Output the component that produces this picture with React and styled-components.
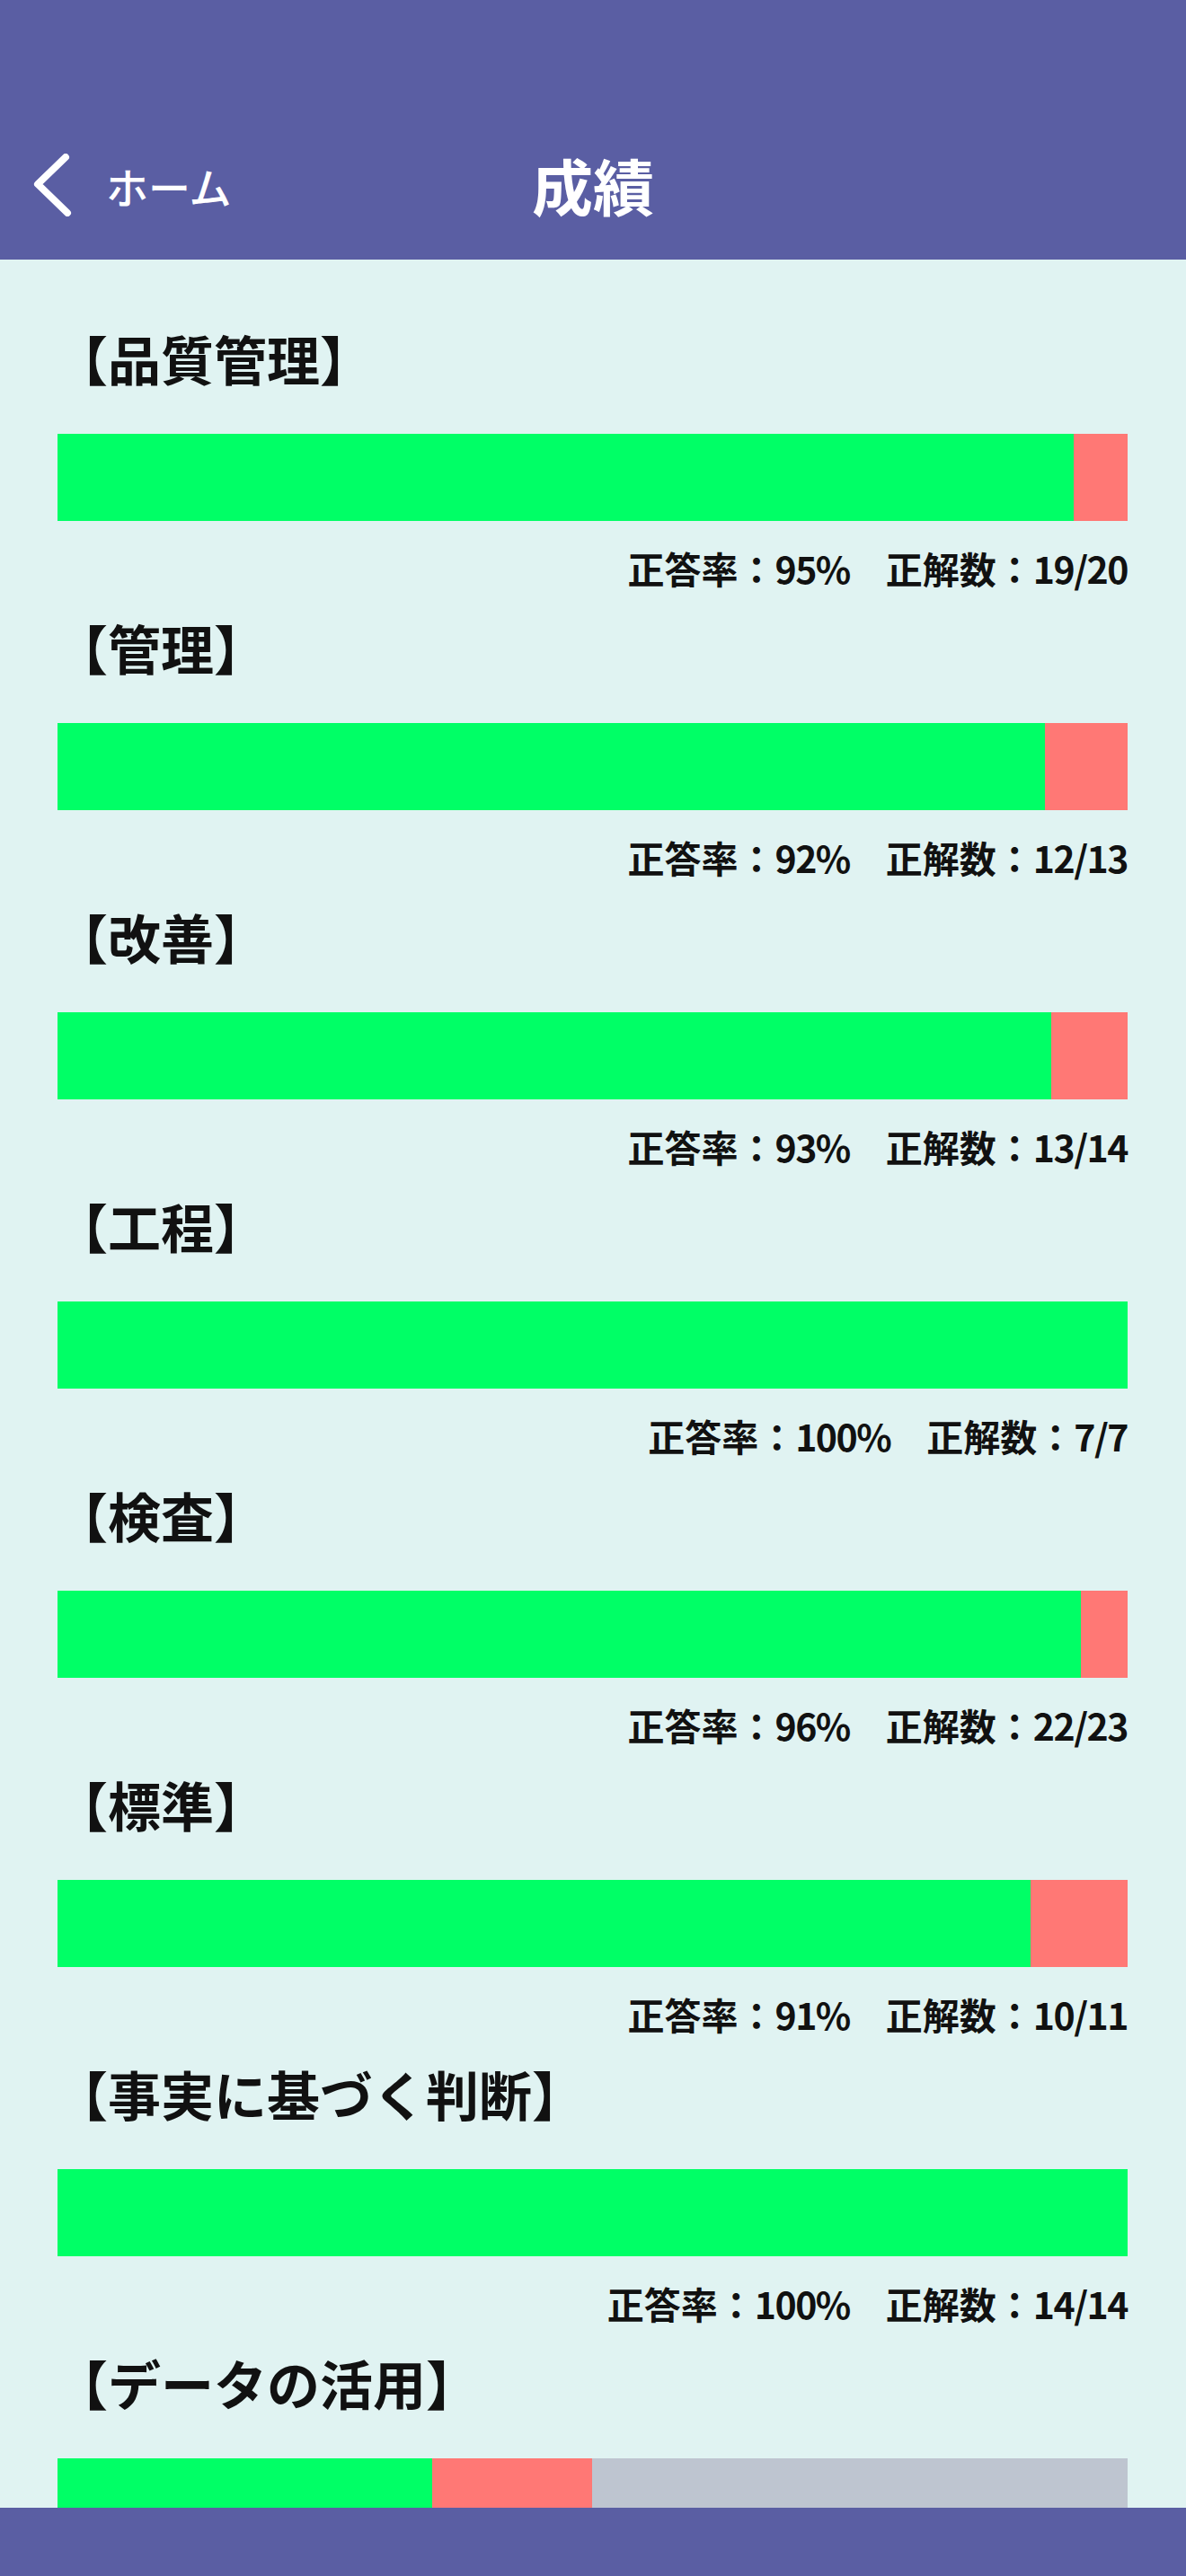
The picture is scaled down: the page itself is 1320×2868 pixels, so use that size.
import React from "react";
import styled, { createGlobalStyle } from "styled-components";

const GlobalStyle = createGlobalStyle`
  html, body {
    margin: 0;
    padding: 0;
  }
  body {
    font-family: "Noto Sans CJK JP", "Noto Sans", sans-serif;
    background: #e0f3f2;
  }
`;

const Screen = styled.div`
  display: flex;
  flex-direction: column;
  width: 1320px;
  height: 2868px;
  overflow: hidden;
  background: #e0f3f2;
`;

const Header = styled.header`
  flex: none;
  height: 289px;
  box-sizing: border-box;
  padding-top: 146px;
  background: #5a5ea3;
  color: #ffffff;
`;

const NavRow = styled.div`
  display: grid;
  grid-template-columns: 1fr auto 1fr;
  align-items: center;
  height: 120px;
`;

const BackButton = styled.button`
  justify-self: start;
  display: flex;
  align-items: center;
  gap: 38px;
  padding: 0 0 0 36px;
  border: 0;
  background: transparent;
  color: #ffffff;
  font-family: inherit;
  font-size: 47px;
  font-weight: 500;
  cursor: pointer;
`;

const Title = styled.h1`
  margin: 0;
  font-size: 68px;
  font-weight: 700;
  line-height: 1;
`;

const Content = styled.main`
  flex: 1;
  min-height: 0;
  overflow: hidden;
  box-sizing: border-box;
  padding: 74px 65px 0 64px;
  display: flex;
  flex-direction: column;
  gap: 25px;
`;

const Section = styled.section`
  display: flex;
  flex-direction: column;
`;

const SectionTitle = styled.h2`
  margin: 0 0 0 -3px;
  font-size: 59px;
  font-weight: 700;
  line-height: 72px;
  color: #111111;
`;

const Bar = styled.div`
  display: flex;
  margin-top: 48px;
  height: 97px;
  flex: none;
  background: #bec5d0;
`;

const Segment = styled.div`
  height: 100%;
  background: ${(p) => (p.$kind === "ok" ? "#00ff66" : "#ff7875")};
`;

const Stats = styled.div`
  display: flex;
  justify-content: flex-end;
  gap: 40px;
  margin-top: 24px;
  font-size: 41px;
  font-weight: 700;
  line-height: 56px;
  color: #111111;
`;

const Num = styled.span`
  letter-spacing: -1.5px;
`;

const Footer = styled.footer`
  flex: none;
  height: 76px;
  background: #5a5ea3;
`;

const ChevronLeft = () => (
  <svg width="44" height="70" viewBox="0 0 44 70" fill="none">
    <path
      d="M37 4 L6 34 L39 66"
      stroke="#ffffff"
      strokeWidth="8"
      strokeLinecap="round"
      strokeLinejoin="round"
    />
  </svg>
);

const results = [
  { name: "品質管理", correct: 19, total: 20 },
  { name: "管理", correct: 12, total: 13 },
  { name: "改善", correct: 13, total: 14 },
  { name: "工程", correct: 7, total: 7 },
  { name: "検査", correct: 22, total: 23 },
  { name: "標準", correct: 10, total: 11 },
  { name: "事実に基づく判断", correct: 14, total: 14 },
  // this one isn't finished yet, so part of the bar stays grey
  { name: "データの活用", correct: 7, total: 10, answered: 0.5 },
];

function ResultSection({ item }) {
  const answered = item.answered ?? 1;
  const rate = Math.round((item.correct / item.total) * 100);
  const okWidth = (item.correct / item.total) * answered * 100;
  const ngWidth = answered * 100 - okWidth;

  return (
    <Section>
      <SectionTitle>【{item.name}】</SectionTitle>
      <Bar>
        <Segment $kind="ok" style={{ width: okWidth + "%" }} />
        <Segment $kind="ng" style={{ width: ngWidth + "%" }} />
      </Bar>
      <Stats>
        <span>
          正答率：<Num>{rate}%</Num>
        </span>
        <span>
          正解数：<Num>{item.correct}/{item.total}</Num>
        </span>
      </Stats>
    </Section>
  );
}

export default function App() {
  return (
    <>
      <GlobalStyle />
      <Screen>
        <Header>
          <NavRow>
            <BackButton>
              <ChevronLeft />
              ホーム
            </BackButton>
            <Title>成績</Title>
            <div />
          </NavRow>
        </Header>
        <Content>
          {results.map((item) => (
            <ResultSection key={item.name} item={item} />
          ))}
        </Content>
        <Footer />
      </Screen>
    </>
  );
}
